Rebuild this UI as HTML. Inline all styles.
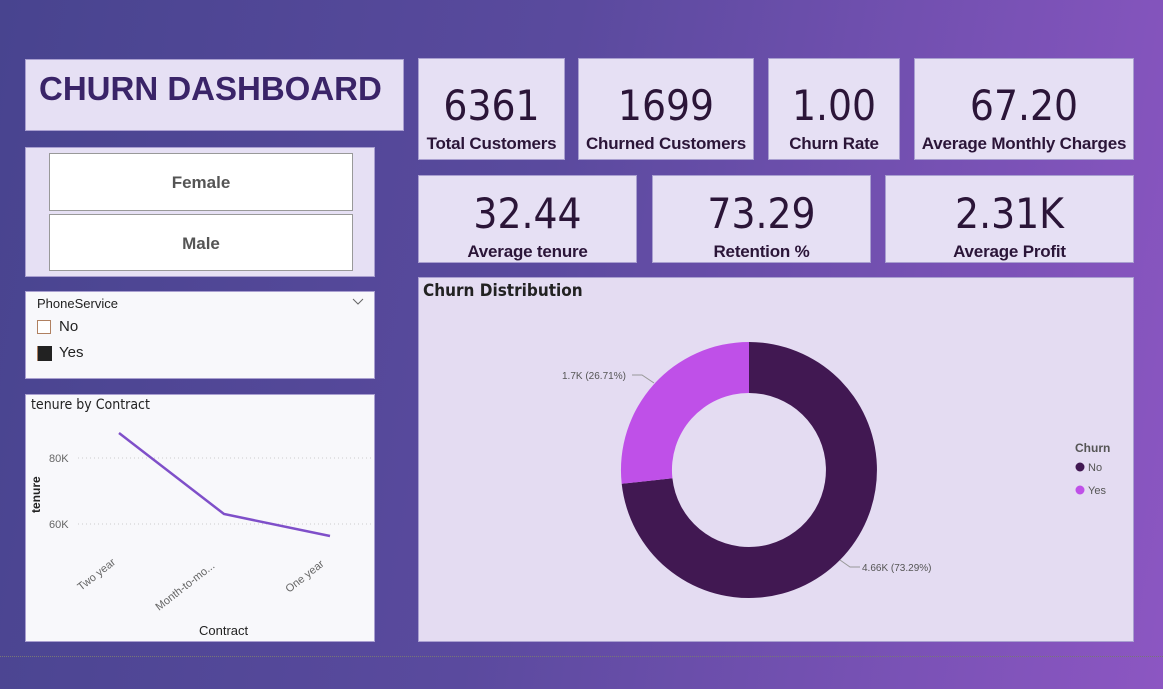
<!DOCTYPE html>
<html><head><meta charset="utf-8"><style>
*{margin:0;padding:0;box-sizing:border-box}
body{width:1163px;height:689px;overflow:hidden;font-family:"Liberation Sans",sans-serif;background:linear-gradient(100deg,#48448f 0%,#5a4a9e 45%,#7a52b6 80%,#8c56c2 100%);position:relative}
.c{position:absolute;background:#e6e0f4;border:1px solid #a99fd0}
.kpi .v{position:absolute;left:0;right:0;text-align:center;font-size:42px;color:#2b1538;font-family:"DejaVu Sans Condensed","DejaVu Sans",sans-serif}
.kpi .l{position:absolute;left:0;right:0;text-align:center;font-size:17px;font-weight:bold;color:#2b1538;letter-spacing:-0.2px}
.btn{position:absolute;left:23px;width:304px;background:#fff;border:1px solid #999;text-align:center;font-weight:bold;color:#555;font-size:17px}
</style></head><body>
<div class="c" style="left:25px;top:59px;width:379px;height:72px"><div style="position:absolute;left:13px;top:10px;font-size:33px;font-weight:bold;color:#3a2468">CHURN DASHBOARD</div></div>

<div class="c" style="left:25px;top:147px;width:350px;height:130px">
<div class="btn" style="top:5px;height:58px;line-height:58px">Female</div>
<div class="btn" style="top:66px;height:57px;line-height:57px">Male</div></div>

<div class="c" style="left:25px;top:291px;width:350px;height:88px;background:#f8f8fb">
<div style="position:absolute;left:11px;top:4px;font-size:13px;color:#222">PhoneService</div>
<svg style="position:absolute;left:326px;top:6px" width="12" height="8"><path d="M1 1l5 5 5-5" stroke="#666" fill="none"/></svg>
<div style="position:absolute;left:11px;top:28px;width:14px;height:14px;border:1px solid #b08060;background:#fff"></div>
<div style="position:absolute;left:33px;top:26px;font-size:15px;color:#222">No</div>
<div style="position:absolute;left:11px;top:54px;width:15px;height:15px;background:#222;border-left:1px solid #b08060"></div>
<div style="position:absolute;left:33px;top:52px;font-size:15px;color:#222">Yes</div></div>

<div class="c" style="left:25px;top:394px;width:350px;height:248px;background:#f8f8fb">
<svg width="350" height="248" style="position:absolute;left:0;top:0">
<text x="5" y="14" font-size="14" fill="#222" font-family="DejaVu Sans Condensed,sans-serif">tenure by Contract</text>
<line x1="52" y1="63" x2="345" y2="63" stroke="#ccc" stroke-dasharray="1,3"/>
<line x1="52" y1="129" x2="345" y2="129" stroke="#ccc" stroke-dasharray="1,3"/>
<text x="23" y="67" font-size="11" fill="#666">80K</text>
<text x="23" y="133" font-size="11" fill="#666">60K</text>
<text transform="translate(14,118) rotate(-90)" font-size="12" font-weight="bold" fill="#222">tenure</text>
<polyline points="93,38 198,119 304,141" fill="none" stroke="#7f4fc9" stroke-width="2.5"/>
<text transform="translate(55,196) rotate(-38)" font-size="11" fill="#666">Two year</text>
<text transform="translate(133,216) rotate(-38)" font-size="11" fill="#666">Month-to-mo...</text>
<text transform="translate(263,198) rotate(-38)" font-size="11" fill="#666">One year</text>
<text x="173" y="240" font-size="13" fill="#222">Contract</text>
</svg></div>

<div class="c kpi" style="left:418px;top:58px;width:147px;height:102px"><div class="v" style="top:22px">6361</div><div class="l" style="top:75px">Total Customers</div></div>
<div class="c kpi" style="left:578px;top:58px;width:176px;height:102px"><div class="v" style="top:22px">1699</div><div class="l" style="top:75px">Churned Customers</div></div>
<div class="c kpi" style="left:768px;top:58px;width:132px;height:102px"><div class="v" style="top:22px">1.00</div><div class="l" style="top:75px">Churn Rate</div></div>
<div class="c kpi" style="left:914px;top:58px;width:220px;height:102px"><div class="v" style="top:22px">67.20</div><div class="l" style="top:75px">Average Monthly Charges</div></div>

<div class="c kpi" style="left:418px;top:175px;width:219px;height:88px;overflow:hidden"><div class="v" style="top:13px">32.44</div><div class="l" style="top:66px">Average tenure</div></div>
<div class="c kpi" style="left:652px;top:175px;width:219px;height:88px;overflow:hidden"><div class="v" style="top:13px">73.29</div><div class="l" style="top:66px">Retention %</div></div>
<div class="c kpi" style="left:885px;top:175px;width:249px;height:88px;overflow:hidden"><div class="v" style="top:13px">2.31K</div><div class="l" style="top:66px">Average Profit</div></div>

<div class="c" style="left:418px;top:277px;width:716px;height:365px;background:#e4dcf2">
<svg width="716" height="365" style="position:absolute;left:-1px;top:-1px">
<text x="5" y="19" font-size="17" font-weight="bold" fill="#222" font-family="DejaVu Sans Condensed,sans-serif">Churn Distribution</text>
<g transform="translate(-418,-277)">
<path d="M749 342 A128 128 0 1 1 621.7 483.8 L672.4 478.3 A77 77 0 1 0 749 393 Z" fill="#411852"/>
<path d="M621.7 483.8 A128 128 0 0 1 749 342 L749 393 A77 77 0 0 0 672.4 478.3 Z" fill="#bf50e8"/>
<polyline points="654,383 642,375 632,375" fill="none" stroke="#999"/>
<text x="562" y="379" font-size="10" fill="#555">1.7K (26.71%)</text>
<polyline points="840,560 850,567 860,567" fill="none" stroke="#999"/>
<text x="862" y="571" font-size="10" fill="#555">4.66K (73.29%)</text>
<text x="1075" y="452" font-size="12" font-weight="bold" fill="#555">Churn</text>
<circle cx="1080" cy="467" r="4.5" fill="#411852"/><text x="1088" y="471" font-size="11" fill="#555">No</text>
<circle cx="1080" cy="490" r="4.5" fill="#bf50e8"/><text x="1088" y="494" font-size="11" fill="#555">Yes</text>
</g></svg></div>

<div style="position:absolute;left:0;top:656px;width:1163px;border-top:1px dotted #777"></div>
</body></html>
